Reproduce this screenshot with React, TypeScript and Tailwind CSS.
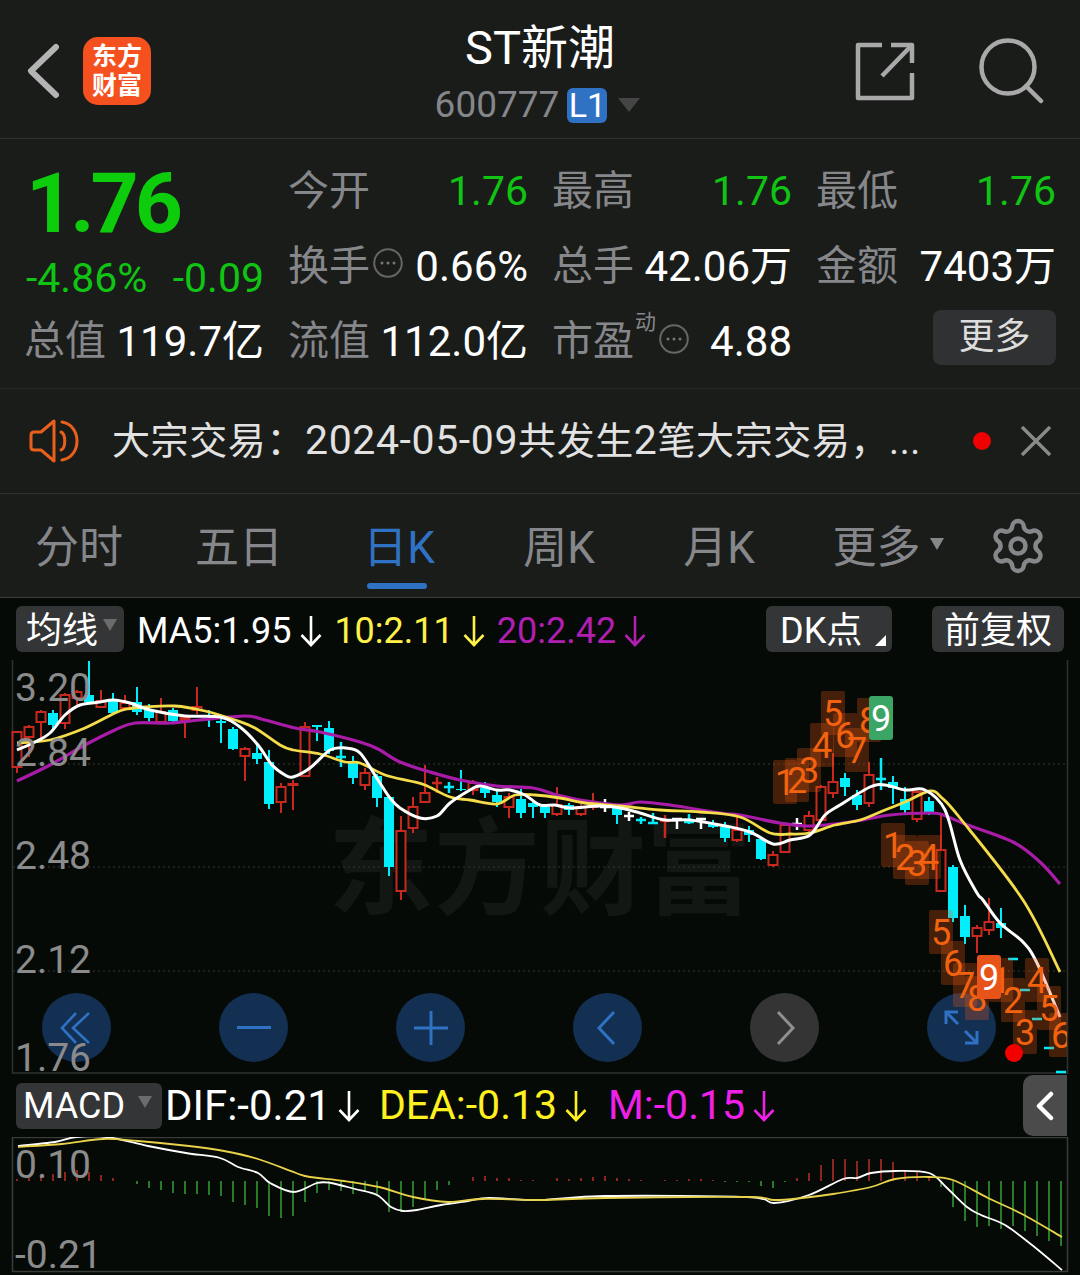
import { Settings } from 'lucide-react';

type Candle = [number, number, number, number, 'r' | 'c' | 'w'];

// high, body top, body bottom, low, kind. x is 17 + 12 * index
const CANDLES: Candle[] = [
  [731, 732, 767, 773, 'r'], [725, 727, 737, 757, 'r'], [710, 712, 722, 740, 'r'], [710, 713, 725, 730, 'c'],
  [693, 695, 723, 729, 'r'], [690, 692, 698, 707, 'r'], [661, 695, 702, 703, 'c'], [690, 701, 707, 708, 'r'],
  [693, 699, 713, 715, 'c'], [695, 703, 708, 709, 'r'], [687, 702, 712, 715, 'c'], [704, 710, 718, 722, 'c'],
  [698, 712, 722, 723, 'r'], [708, 710, 721, 722, 'c'], [716, 718, 720, 738, 'r'], [687, 707, 710, 714, 'r'],
  [710, 715, 717, 727, 'c'], [717, 721, 723, 743, 'c'], [727, 729, 749, 750, 'c'], [747, 749, 756, 781, 'r'],
  [743, 753, 759, 764, 'c'], [750, 762, 804, 809, 'c'], [783, 787, 802, 813, 'r'], [780, 784, 785, 810, 'r'],
  [722, 727, 776, 777, 'r'], [725, 725, 727, 741, 'c'], [721, 728, 751, 754, 'c'], [742, 757, 757, 767, 'c'],
  [756, 763, 778, 784, 'c'], [768, 773, 785, 790, 'r'], [774, 776, 798, 807, 'c'], [795, 797, 867, 876, 'c'],
  [816, 831, 891, 900, 'r'], [797, 807, 828, 833, 'r'], [765, 793, 802, 803, 'r'], [777, 783, 783, 793, 'r'],
  [782, 787, 787, 793, 'c'], [770, 789, 790, 791, 'c'], [780, 783, 790, 795, 'r'], [782, 788, 793, 798, 'c'],
  [790, 795, 802, 807, 'c'], [793, 797, 807, 818, 'r'], [789, 799, 813, 818, 'c'], [800, 803, 807, 818, 'c'],
  [805, 807, 813, 818, 'c'], [787, 805, 814, 816, 'r'], [803, 805, 810, 815, 'c'], [804, 807, 814, 816, 'r'],
  [793, 806, 807, 810, 'r'], [799, 807, 807, 812, 'w'], [806, 808, 815, 824, 'c'], [812, 816, 816, 821, 'w'],
  [817, 820, 820, 824, 'c'], [813, 823, 823, 824, 'c'], [815, 821, 821, 838, 'r'], [819, 819, 819, 829, 'w'],
  [814, 822, 822, 824, 'c'], [819, 819, 819, 829, 'w'], [820, 823, 827, 828, 'c'], [822, 827, 838, 842, 'c'],
  [815, 830, 840, 842, 'r'], [826, 830, 835, 842, 'c'], [837, 839, 859, 860, 'c'], [851, 855, 865, 867, 'r'],
  [823, 825, 852, 853, 'r'], [818, 824, 824, 830, 'w'], [811, 816, 830, 832, 'r'], [785, 787, 820, 822, 'r'],
  [753, 782, 793, 798, 'r'], [773, 778, 787, 796, 'c'], [790, 795, 805, 810, 'c'], [762, 775, 803, 807, 'r'],
  [758, 779, 779, 790, 'c'], [776, 782, 788, 804, 'c'], [787, 799, 810, 813, 'c'], [788, 792, 819, 822, 'r'],
  [797, 801, 812, 815, 'c'], [813, 850, 891, 892, 'r'], [865, 867, 918, 922, 'c'], [905, 916, 937, 944, 'c'],
  [925, 928, 936, 953, 'r'], [898, 922, 930, 935, 'r'], [908, 923, 928, 938, 'c'], [959, 959, 959, 959, 'c'],
  [990, 990, 990, 990, 'c'], [1019, 1019, 1019, 1019, 'c'], [1048, 1048, 1048, 1048, 'c'], [1072, 1072, 1072, 1072, 'c'],
];

const MA5: number[][] = [
  [17, 750], [35, 742], [50, 733], [65, 715], [80, 705], [100, 702], [113, 700], [130, 703], [150, 710], [185, 716],
  [220, 717], [240, 727], [258, 745], [272, 765], [285, 775], [293, 777], [310, 768], [330, 750], [345, 748], [360, 753],
  [378, 780], [390, 798], [400, 808], [420, 818], [437, 816], [450, 803], [470, 790], [480, 786], [497, 790], [510, 790],
  [525, 795], [540, 805], [555, 805], [570, 808], [600, 806], [620, 808], [640, 813], [665, 820], [690, 820], [720, 825],
  [750, 832], [773, 844], [790, 840], [810, 835], [825, 815], [840, 805], [870, 787], [885, 785], [905, 790], [925, 790],
  [945, 810], [960, 860], [977, 893], [983, 900], [1000, 923], [1023, 942], [1037, 963], [1060, 1017],
];
const MA10: number[][] = [
  [17, 743], [50, 740], [85, 728], [115, 713], [127, 709], [145, 707], [175, 706], [205, 711], [235, 720], [255, 728],
  [280, 745], [293, 750], [320, 754], [345, 762], [360, 763], [385, 775], [410, 781], [425, 785], [450, 797], [470, 800],
  [497, 804], [515, 795], [535, 795], [560, 798], [585, 803], [620, 806], [660, 810], [700, 812], [740, 817], [770, 833],
  [790, 834], [810, 833], [835, 825], [860, 820], [885, 810], [905, 802], [930, 791], [942, 798], [960, 818], [1023, 900], [1060, 972],
];
const MA20: number[][] = [
  [17, 781], [50, 765], [85, 745], [115, 730], [135, 723], [170, 723], [200, 720], [245, 716], [265, 720], [295, 728],
  [320, 732], [360, 742], [378, 749], [400, 762], [430, 772], [460, 780], [497, 786], [533, 788], [557, 795], [580, 800],
  [620, 805], [640, 802], [670, 805], [720, 813], [740, 815], [780, 823], [810, 826], [850, 822], [890, 815], [930, 813],
  [943, 815], [965, 824], [1013, 842], [1040, 862], [1060, 884],
];

const DIF: number[][] = [
  [18, 1146], [55, 1142], [76, 1137], [107, 1137], [148, 1146], [186, 1153], [220, 1158], [238, 1167], [258, 1173], [270, 1183],
  [294, 1192], [317, 1183], [331, 1183], [355, 1189], [377, 1195], [391, 1207], [403, 1211], [417, 1210], [441, 1205], [468, 1201],
  [489, 1198], [540, 1200], [605, 1196], [747, 1197], [774, 1203], [809, 1195], [843, 1179], [857, 1178], [871, 1173], [895, 1171],
  [929, 1173], [946, 1187], [967, 1207], [981, 1215], [1005, 1225], [1032, 1245], [1062, 1270],
];
const DEA: number[][] = [
  [18, 1147], [62, 1144], [103, 1139], [138, 1141], [189, 1146], [224, 1151], [258, 1159], [296, 1173], [310, 1177], [344, 1181],
  [379, 1187], [413, 1197], [448, 1202], [482, 1199], [540, 1200], [605, 1198], [747, 1197], [774, 1200], [802, 1198], [833, 1194],
  [871, 1187], [895, 1179], [929, 1177], [953, 1180], [988, 1198], [1022, 1214], [1062, 1237],
];

// histogram height in px per candle index: positive is red, negative is green
const HIST: number[] = [
  2, 3, 5, 7, 9, 11, 9, 6, 3, 0, -3, -7, -9, -12, -13, -13, -14, -15, -21, -24, -27, -35, -37, -35, -21, -12, -9, -10, -13, -11,
  -15, -31, -31, -26, -19, -9, -4, 0, 4, 5, 3, 3, 1, 1, 0, 3, 2, 3, 4, 5, 3, 2, 1, 0, 1, 1, 2, 2, 1, -1, -1, -1, -5, -7, -1,
  3, 8, 16, 22, 22, 20, 22, 22, 19, 11, 10, 5, -6, -26, -40, -46, -45, -48, -45, -50, -55, -60, -65,
];

// digit, x, y, solid background colour if it has one
const MARKS: [string, number, number, string?][] = [
  ['1', 785, 782], ['2', 797, 780], ['3', 809, 770], ['4', 822, 745], ['5', 833, 713], ['6', 845, 735], ['7', 857, 750], ['8', 869, 720],
  ['9', 881, 718, '#3aa565'],
  ['1', 893, 845], ['2', 905, 857], ['3', 917, 863], ['4', 929, 857], ['5', 941, 932], ['6', 953, 963], ['7', 965, 985], ['8', 977, 998],
  ['1', 1001, 980], ['2', 1013, 1000], ['3', 1025, 1032], ['4', 1037, 980], ['5', 1049, 1008], ['6', 1061, 1035],
  ['9', 989, 977, '#e8531a'],
];

function smooth(points: number[][]) {
  let d = `M${points[0][0]} ${points[0][1]}`;
  for (let i = 0; i < points.length - 1; i++) {
    const p0 = points[i - 1] || points[i];
    const p1 = points[i];
    const p2 = points[i + 1];
    const p3 = points[i + 2] || p2;
    const c1x = p1[0] + (p2[0] - p0[0]) / 6;
    const c1y = p1[1] + (p2[1] - p0[1]) / 6;
    const c2x = p2[0] - (p3[0] - p1[0]) / 6;
    const c2y = p2[1] - (p3[1] - p1[1]) / 6;
    d += ` C${c1x} ${c1y} ${c2x} ${c2y} ${p2[0]} ${p2[1]}`;
  }
  return d;
}

function DownArrow({ color }: { color: string }) {
  return (
    <svg width="22" height="32" viewBox="0 0 22 32" fill="none" stroke={color} strokeWidth="2.6" className="shrink-0">
      <path d="M11 1V30M1.5 20L11 30L20.5 20" />
    </svg>
  );
}

function DotsCircle({ className }: { className: string }) {
  return (
    <svg width="30" height="30" viewBox="0 0 30 30" className={className}>
      <circle cx="15" cy="15" r="13.8" fill="none" stroke="#666" strokeWidth="2" />
      <circle cx="9" cy="15" r="1.5" fill="#777" />
      <circle cx="15" cy="15" r="1.5" fill="#777" />
      <circle cx="21" cy="15" r="1.5" fill="#777" />
    </svg>
  );
}

function Cell({ label, value, green, extra }: { label: string; value: string; green?: boolean; extra?: React.ReactNode }) {
  return (
    <div className="flex items-center justify-between h-[75px]">
      <div className="flex items-center text-[#86878a] text-[41px]">
        <span>{label}</span>
        {extra}
      </div>
      <span className={green ? 'text-[#10c414] text-[41px]' : 'text-white text-[42px]'}>{value}</span>
    </div>
  );
}

function RoundButton({ grey, children }: { grey?: boolean; children: React.ReactNode }) {
  return (
    <div className={`w-[69px] h-[69px] rounded-full flex items-center justify-center ${grey ? 'bg-[#333433]' : 'bg-[#132f52]'}`}>
      {children}
    </div>
  );
}

function Candles() {
  return (
    <>
      {CANDLES.map(([high, top, bottom, low, kind], i) => {
        const x = 17 + 12 * i;
        const color = kind === 'r' ? '#c9281e' : kind === 'c' ? '#00eefc' : '#ffffff';
        if (top === bottom) {
          return (
            <g key={i} stroke={color} strokeWidth="2.5">
              <line x1={x} x2={x} y1={high} y2={low} />
              <line x1={x - 5} x2={x + 5} y1={top} y2={top} />
            </g>
          );
        }
        return (
          <g key={i}>
            <line x1={x} x2={x} y1={high} y2={low} stroke={color} strokeWidth="2" />
            {kind === 'r' ? (
              <rect x={x - 4.5} y={top} width="9" height={bottom - top} fill="#060a07" stroke={color} strokeWidth="2" />
            ) : (
              <rect x={x - 5} y={top} width="10" height={bottom - top} fill={color} />
            )}
          </g>
        );
      })}
    </>
  );
}

function Marks() {
  return (
    <g clipPath="url(#main-clip)">
      {MARKS.filter((m) => !m[3]).map(([d, x, y], i) => (
        <rect key={i} x={x - 12} y={y - 22} width="24" height="44" rx="2" fill="#f05a14" fillOpacity="0.27" />
      ))}
      {MARKS.map(([d, x, y, solid], i) => (
        <g key={i}>
          {solid && <rect x={x - 12} y={y - 22} width="24" height="44" rx="3" fill={solid} />}
          <text x={x} y={y + 13} textAnchor="middle" fontSize="36" fill={solid ? '#ffffff' : '#f2620f'}>
            {d}
          </text>
        </g>
      ))}
    </g>
  );
}

function AxisLabel({ className, children }: { className: string; children: string }) {
  return <span className={`absolute left-[15px] text-[39px] leading-[36px] text-[#8b8b8b] ${className}`}>{children}</span>;
}

export default function App() {
  return (
    <div className="w-[1080px] h-[1275px] overflow-hidden bg-[#1a1c1a] font-['Roboto','Noto_Sans_CJK_SC',sans-serif] text-[40px]">
      {/* Top bar */}
      <header className="relative h-[139px] border-b border-[#303230] flex items-center pl-[26px] pr-[36px]">
        <svg width="34" height="56" viewBox="0 0 34 56" fill="none" stroke="#b4b4b4" strokeWidth="6" strokeLinecap="round" strokeLinejoin="round" className="mt-[4px]">
          <path d="M30 4L5 28L30 52" />
        </svg>
        <div className="ml-[23px] mt-[4px] w-[68px] h-[68px] rounded-[15px] bg-[#f4511e] flex flex-col items-center justify-center text-white font-bold text-[25px] leading-[29px]">
          <span>东方</span>
          <span>财富</span>
        </div>
        <div className="absolute left-0 right-0 top-[20px] flex flex-col items-center">
          <span className="text-white text-[47px] leading-[56px]">ST新潮</span>
          <div className="flex items-center mt-[6px] h-[46px] -ml-[5px]">
            <span className="text-[#85868a] text-[37px]">600777</span>
            <span className="ml-[8px] w-[40px] h-[35px] rounded-[6px] bg-[#2f72c4] text-white text-[34px] leading-[35px] text-center">L1</span>
            <span className="ml-[11px] w-0 h-0 border-x-[11px] border-x-transparent border-t-[14px] border-t-[#444544]" />
          </div>
        </div>
        <div className="ml-auto mt-[4px] flex items-center gap-[64px] -mr-[1px]">
          <svg width="60" height="60" viewBox="0 0 60 60" fill="none" stroke="#a9a9a9" strokeWidth="4.5" strokeLinejoin="round" className="ml-[2px]">
            <path d="M27 4H3V57H57V32" />
            <path d="M57 22V4H36" />
            <path d="M57 4L27 35" />
          </svg>
          <svg width="66" height="66" viewBox="0 0 66 66" fill="none" stroke="#a9a9a9" strokeWidth="4.5" strokeLinecap="round">
            <circle cx="29" cy="29" r="26.5" />
            <path d="M47 48L62 63" />
          </svg>
        </div>
      </header>

      {/* Quote */}
      <section className="h-[250px] border-b border-[#262826] pt-[15px] pl-[26px] flex gap-[24px]">
        <div className="w-[238px] shrink-0 flex flex-col">
          <span className="text-[#0ccc0c] text-[84px] leading-[72px] font-bold tracking-[-4px] mt-[14px]">1.76</span>
          <div className="flex justify-between text-[#10c414] text-[41px] leading-[46px] mt-[15px]">
            <span>-4.86%</span>
            <span>-0.09</span>
          </div>
          <div className="flex justify-between h-[75px] items-center mt-[3px]">
            <span className="text-[#86878a] text-[41px] -ml-[2px]">总值</span>
            <span className="text-white text-[42px]">119.7亿</span>
          </div>
        </div>
        <div className="grid grid-cols-[240px_240px_240px] gap-x-[24px] content-start">
          <Cell label="今开" value="1.76" green />
          <Cell label="最高" value="1.76" green />
          <Cell label="最低" value="1.76" green />
          <Cell label="换手" value="0.66%" extra={<DotsCircle className="ml-[3px] -mt-[8px]" />} />
          <Cell label="总手" value="42.06万" />
          <Cell label="金额" value="7403万" />
          <Cell label="流值" value="112.0亿" />
          <Cell
            label="市盈"
            value="4.88"
            extra={
              <>
                <span className="text-[21px] leading-[21px] -mt-[38px] ml-[1px]">动</span>
                <DotsCircle className="ml-[3px] -mt-[6px]" />
              </>
            }
          />
          <div className="flex items-center justify-end h-[75px]">
            <span className="w-[123px] h-[55px] -mt-[9px] rounded-[8px] bg-[#303132] text-[#dddddd] text-[36px] leading-[55px] text-center">更多</span>
          </div>
        </div>
      </section>

      {/* Notice */}
      <section className="h-[105px] border-b border-[#303230] flex items-center pl-[29px] pr-[29px]">
        <svg width="52" height="44" viewBox="0 0 52 44" fill="none" stroke="#e8601c" strokeWidth="3" strokeLinejoin="round" strokeLinecap="round">
          <path d="M25 2V42L12 31H5C3 31 2 30 2 28V16C2 14 3 13 5 13H12Z" />
          <path d="M32 13C37 15 37 29 32 31" />
          <path d="M33 3C53 6 53 38 33 41" />
        </svg>
        <span className="ml-[31px] text-[#e2e2e2] text-[38px] whitespace-nowrap tracking-[0.6px]">
          大宗交易：<span className="text-[41px]">2024-05-09</span>共发生<span className="text-[41px]">2</span>笔大宗交易，...
        </span>
        <span className="ml-auto w-[18px] h-[18px] rounded-full bg-[#f00000]" />
        <svg width="30" height="30" viewBox="0 0 30 30" stroke="#8a8a8a" strokeWidth="3.4" className="ml-[30px]">
          <path d="M1 1L29 29M29 1L1 29" />
        </svg>
      </section>

      {/* Period tabs */}
      <nav className="h-[104px] border-b border-[#3a3c3a] flex text-[#86878a] text-[44px]">
        <div className="w-[160px] flex items-center justify-center pt-[5px] -ml-[1px]">分时</div>
        <div className="w-[160px] flex items-center justify-center pt-[5px]">五日</div>
        <div className="relative w-[160px] flex items-center justify-center pt-[5px] text-[#2f72c4]">
          日K
          <span className="absolute bottom-[8px] left-[48px] w-[60px] h-[6px] rounded-full bg-[#2f72c4]" />
        </div>
        <div className="w-[160px] flex items-center justify-center pt-[5px]">周K</div>
        <div className="w-[160px] flex items-center justify-center pt-[5px]">月K</div>
        <div className="w-[160px] flex items-center justify-center pt-[5px] pl-[18px]">
          更多
          <span className="ml-[9px] -mt-[8px] w-0 h-0 border-x-[7px] border-x-transparent border-t-[12px] border-t-[#86878a]" />
        </div>
        <div className="flex-1 flex items-center justify-center pr-[4px]">
          <Settings size={60} strokeWidth={1.8} color="#86878a" />
        </div>
      </nav>

      {/* Chart area */}
      <div className="bg-[#060a07] h-[678px]">
        <div className="h-[62px] flex items-center pl-[16px] pr-[16px] text-[36px] text-white">
          <div className="w-[108px] h-[46px] rounded-[6px] bg-[#343536] flex items-center pl-[10px] pt-[4px]">
            均线
            <span className="ml-[5px] -mt-[12px] w-0 h-0 border-x-[7px] border-x-transparent border-t-[12px] border-t-[#6c6c6c]" />
          </div>
          <span className="ml-[13px] mt-[4px]">MA5:1.95</span>
          <span className="ml-[9px] mt-[4px]"><DownArrow color="#ffffff" /></span>
          <span className="ml-[12px] mt-[4px] text-[#fff04a]">10:2.11</span>
          <span className="ml-[9px] mt-[4px]"><DownArrow color="#fff04a" /></span>
          <span className="ml-[12px] mt-[4px] text-[#b01fb0]">20:2.42</span>
          <span className="ml-[8px] mt-[4px]"><DownArrow color="#b01fb0" /></span>
          <div className="relative ml-auto w-[126px] h-[46px] rounded-[6px] bg-[#343536] pl-[14px] leading-[50px]">
            DK点
            <span className="absolute right-[6px] bottom-[6px] w-0 h-0 border-l-[11px] border-l-transparent border-b-[11px] border-b-white" />
          </div>
          <div className="ml-[40px] w-[132px] h-[46px] rounded-[6px] bg-[#343536] text-center leading-[50px]">前复权</div>
        </div>

        <div className="relative h-[414px]">
          <div className="absolute left-[42px] top-[333px] w-[954px] flex justify-between">
            <RoundButton>
              <svg width="34" height="34" viewBox="0 0 34 34" fill="none" stroke="#2f72c4" strokeWidth="2.6">
                <path d="M16 2L2 17L16 32M29 2L13 17L29 32" />
              </svg>
            </RoundButton>
            <RoundButton>
              <span className="w-[34px] h-[3px] bg-[#2f72c4]" />
            </RoundButton>
            <RoundButton>
              <svg width="34" height="34" viewBox="0 0 34 34" stroke="#2f72c4" strokeWidth="3">
                <path d="M0 17H34M17 0V34" />
              </svg>
            </RoundButton>
            <RoundButton>
              <svg width="20" height="34" viewBox="0 0 20 34" fill="none" stroke="#2f72c4" strokeWidth="3" className="mr-[4px]">
                <path d="M18 1L3 17L18 33" />
              </svg>
            </RoundButton>
            <RoundButton grey>
              <svg width="20" height="34" viewBox="0 0 20 34" fill="none" stroke="#8f8f8f" strokeWidth="3" className="ml-[2px]">
                <path d="M2 1L17 17L2 33" />
              </svg>
            </RoundButton>
            <RoundButton>
              <svg width="36" height="36" viewBox="0 0 36 36" fill="none" stroke="#2f72c4" strokeWidth="3">
                <path d="M2 2L14 14" />
                <path d="M2 14V2H14" />
                <path d="M21 21L33 33" />
                <path d="M33 21V33H21" />
              </svg>
            </RoundButton>
          </div>
          <svg width="1080" height="414" viewBox="0 660 1080 414" className="absolute inset-0">
            <defs>
              <clipPath id="main-clip">
                <rect x="12" y="660" width="1055" height="414" />
              </clipPath>
            </defs>
            <text x="540" y="906" textAnchor="middle" fontSize="106" fontWeight="700" fill="#131714">
              东方财富
            </text>
            <g stroke="#333533" strokeWidth="1" strokeDasharray="2 3">
              <line x1="13" x2="1067" y1="764" y2="764" />
              <line x1="13" x2="1067" y1="867" y2="867" />
              <line x1="13" x2="1067" y1="971" y2="971" />
            </g>
            <path d="M12.5 660V1073H1067.5V660" fill="none" stroke="#303230" strokeWidth="1.5" />
            <Candles />
            <path d={smooth(MA20)} fill="none" stroke="#a81ca8" strokeWidth="3.2" />
            <path d={smooth(MA10)} fill="none" stroke="#f5dc4a" strokeWidth="2.8" />
            <path d={smooth(MA5)} fill="none" stroke="#ffffff" strokeWidth="3" />
            <Marks />
            <circle cx="1014" cy="1053" r="9" fill="#f20000" />
          </svg>
          <AxisLabel className="top-[10px]">3.20</AxisLabel>
          <AxisLabel className="top-[75px]">2.84</AxisLabel>
          <AxisLabel className="top-[178px]">2.48</AxisLabel>
          <AxisLabel className="top-[282px]">2.12</AxisLabel>
          <AxisLabel className="top-[380px]">1.76</AxisLabel>
        </div>

        <div className="relative h-[63px] flex items-center pl-[16px] text-[42px] text-white">
          <div className="w-[146px] h-[46px] rounded-[6px] bg-[#343536] flex items-center pl-[7px] text-[36px]">
            MACD
            <span className="ml-[13px] -mt-[8px] w-0 h-0 border-x-[7px] border-x-transparent border-t-[12px] border-t-[#6c6c6c]" />
          </div>
          <span className="ml-[3px]">DIF:-0.21</span>
          <span className="ml-[7px]"><DownArrow color="#ffffff" /></span>
          <span className="ml-[19px] text-[41px] text-[#fff020]">DEA:-0.13</span>
          <span className="ml-[8px]"><DownArrow color="#fff020" /></span>
          <span className="ml-[21px] text-[41px] text-[#f020e8]">M:-0.15</span>
          <span className="ml-[8px]"><DownArrow color="#f020e8" /></span>
          <div className="absolute left-[1023px] top-[1px] w-[44px] h-[61px] rounded-l-[10px] bg-[#4a4b4a] flex items-center justify-center">
            <svg width="18" height="30" viewBox="0 0 18 30" fill="none" stroke="#ffffff" strokeWidth="4.5" strokeLinecap="round" strokeLinejoin="round">
              <path d="M15 3L3 15L15 27" />
            </svg>
          </div>
        </div>

        <div className="relative h-[139px]">
          <svg width="1080" height="139" viewBox="0 1137 1080 139" className="absolute inset-0">
            <path d="M12.5 1137.5H1067.5V1271.5H12.5Z" fill="none" stroke="#3a3c3a" strokeWidth="1.5" />
            {HIST.map((h, i) =>
              h === 0 ? null : (
                <line
                  key={i}
                  x1={17 + 12 * i}
                  x2={17 + 12 * i}
                  y1={1181}
                  y2={1181 - h}
                  stroke={h > 0 ? '#8e2620' : '#2a7a2a'}
                  strokeWidth="2"
                />
              ),
            )}
            <path d={smooth(DIF)} fill="none" stroke="#ffffff" strokeWidth="1.8" />
            <path d={smooth(DEA)} fill="none" stroke="#e8d24a" strokeWidth="1.8" />
          </svg>
          <AxisLabel className="top-[10px]">0.10</AxisLabel>
          <AxisLabel className="top-[100px]">-0.21</AxisLabel>
        </div>
      </div>
    </div>
  );
}
